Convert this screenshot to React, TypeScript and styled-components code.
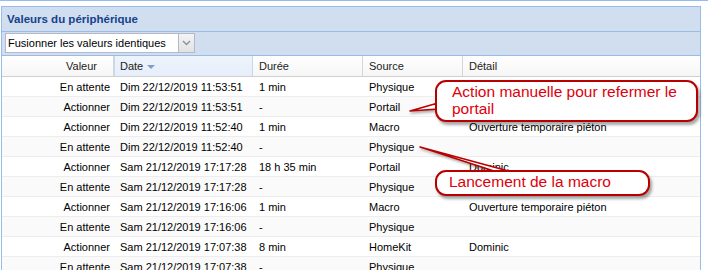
import React from 'react';
import styled, { createGlobalStyle } from 'styled-components';

const GlobalStyle = createGlobalStyle`
  html, body {
    margin: 0;
    padding: 0;
    background: #fff;
  }
  body {
    font-family: "Liberation Sans", Arial, sans-serif;
  }
`;

type RowType = {
  value: string;
  date: string;
  duration: string;
  source: string;
  detail: string;
};

const rows: RowType[] = [
  { value: 'En attente', date: 'Dim 22/12/2019 11:53:51', duration: '1 min', source: 'Physique', detail: '' },
  { value: 'Actionner', date: 'Dim 22/12/2019 11:53:51', duration: '-', source: 'Portail', detail: '' },
  { value: 'Actionner', date: 'Dim 22/12/2019 11:52:40', duration: '1 min', source: 'Macro', detail: 'Ouverture temporaire piéton' },
  { value: 'En attente', date: 'Dim 22/12/2019 11:52:40', duration: '-', source: 'Physique', detail: '' },
  { value: 'Actionner', date: 'Sam 21/12/2019 17:17:28', duration: '18 h 35 min', source: 'Portail', detail: 'Dominic' },
  { value: 'En attente', date: 'Sam 21/12/2019 17:17:28', duration: '-', source: 'Physique', detail: '' },
  { value: 'Actionner', date: 'Sam 21/12/2019 17:16:06', duration: '1 min', source: 'Macro', detail: 'Ouverture temporaire piéton' },
  { value: 'En attente', date: 'Sam 21/12/2019 17:16:06', duration: '-', source: 'Physique', detail: '' },
  { value: 'Actionner', date: 'Sam 21/12/2019 17:07:38', duration: '8 min', source: 'HomeKit', detail: 'Dominic' },
  { value: 'En attente', date: 'Sam 21/12/2019 17:07:38', duration: '-', source: 'Physique', detail: '' },
];

const App = () => {
  return (
    <Page>
      <GlobalStyle />
      <TopRule />
      <Panel>
        <PanelHeader>Valeurs du périphérique</PanelHeader>
        <Toolbar>
          <Combo>
            <ComboText>Fusionner les valeurs identiques</ComboText>
            <ComboTrigger>
              <svg width="9" height="6" viewBox="0 0 9 6">
                <path d="M1 1 L4.5 4.5 L8 1" fill="none" stroke="#8a95a8" strokeWidth="1.5" />
              </svg>
            </ComboTrigger>
          </Combo>
        </Toolbar>
        <HeaderRow>
          <HeadCell $align="right" $padRight={16}>Valeur</HeadCell>
          <HeadCell $sorted>
            Date
            <SortArrow />
          </HeadCell>
          <HeadCell>Durée</HeadCell>
          <HeadCell>Source</HeadCell>
          <HeadCell $last>Détail</HeadCell>
        </HeaderRow>
        {rows.map((r, i) => (
          <Row key={i} $alt={i % 2 === 1}>
            <Cell $align="right">{r.value}</Cell>
            <Cell>{r.date}</Cell>
            <Cell>{r.duration}</Cell>
            <Cell>{r.source}</Cell>
            <Cell>{r.detail}</Cell>
          </Row>
        ))}
      </Panel>

      <Tails width="708" height="270" viewBox="0 0 708 270">
        <polygon points="410,111 438,103 438,109" fill="#fff" stroke="#b80000" strokeWidth="1.5" strokeLinejoin="round" />
        <polygon points="420,147 497,172 512,172" fill="#fff" stroke="#b80000" strokeWidth="1.5" strokeLinejoin="round" />
      </Tails>
      <Callout $left={435} $top={80} $width={263} $height={42} $padLeft={15}>
        Action manuelle pour refermer le
        <br />
        portail
      </Callout>
      <Callout $left={435} $top={170} $width={215} $height={26} $padLeft={12}>
        Lancement de la macro
      </Callout>
    </Page>
  );
};

export default App;

const Page = styled.div`
  position: relative;
  width: 708px;
  height: 270px;
  overflow: hidden;
  background: #fff;
`;

const TopRule = styled.div`
  height: 0;
  border-top: 1px solid #99bbe8;
  margin-bottom: 5px;
`;

const Panel = styled.div`
  margin-left: 1px;
  width: 700px;
  box-sizing: border-box;
  border: 1px solid #99bbe8;
  border-bottom: none;
`;

const PanelHeader = styled.div`
  height: 24px;
  line-height: 24px;
  padding-left: 5px;
  background: #d0def0;
  border-bottom: 1px solid #99bbe8;
  color: #15428b;
  font-size: 11.5px;
  font-weight: bold;
`;

const Toolbar = styled.div`
  height: 24px;
  box-sizing: border-box;
  padding: 1px 0 0 3px;
  background: #d0def0;
  border-bottom: 1px solid #99bbe8;
  display: flex;
  align-items: flex-start;
`;

const Combo = styled.div`
  display: flex;
  width: 190px;
  height: 20px;
`;

const ComboText = styled.div`
  flex: 1;
  box-sizing: border-box;
  height: 20px;
  line-height: 18px;
  padding-left: 2px;
  background: #fff;
  border: 1px solid #b5b8c8;
  border-right: none;
  font-size: 11px;
  color: #000;
  white-space: nowrap;
`;

const ComboTrigger = styled.div`
  width: 17px;
  height: 20px;
  box-sizing: border-box;
  border: 1px solid #b5b8c8;
  background: linear-gradient(#f4f4f4, #e2e2e2);
  display: flex;
  align-items: center;
  justify-content: center;
`;

const columns = '112px 139px 110px 100px 1fr';

const HeaderRow = styled.div`
  display: grid;
  grid-template-columns: ${columns};
  height: 21px;
  box-sizing: border-box;
  border-bottom: 1px solid #d0d0d0;
  background: linear-gradient(#ffffff, #f6f6f6);
`;

const HeadCell = styled.div<{ $align?: 'left' | 'right'; $padRight?: number; $sorted?: boolean; $last?: boolean }>`
  display: flex;
  align-items: center;
  justify-content: ${(p) => (p.$align === 'right' ? 'flex-end' : 'flex-start')};
  padding: 0 ${(p) => p.$padRight ?? 4}px 0 6px;
  font-size: 11px;
  color: #222;
  border-right: ${(p) => (p.$last ? 'none' : '1px solid')};
  border-right-color: ${(p) => (p.$sorted ? '#c5d8ef' : '#d6d6d6')};
  box-shadow: ${(p) => (p.$sorted ? 'inset 1px 0 0 #c5d8ef' : 'none')};
  background: ${(p) => (p.$sorted ? 'linear-gradient(#eef4fc, #e6eefa)' : 'transparent')};
  white-space: nowrap;
`;

const SortArrow = styled.span`
  display: inline-block;
  margin-left: 4px;
  margin-top: 1px;
  width: 0;
  height: 0;
  border-left: 4px solid transparent;
  border-right: 4px solid transparent;
  border-top: 4px solid #7e9fcc;
`;

const Row = styled.div<{ $alt: boolean }>`
  display: grid;
  grid-template-columns: ${columns};
  height: 20px;
  box-sizing: border-box;
  border-bottom: 1px solid #ededed;
  background: ${(p) => (p.$alt ? '#fafafa' : '#fff')};
`;

const Cell = styled.div<{ $align?: 'left' | 'right' }>`
  display: flex;
  align-items: center;
  justify-content: ${(p) => (p.$align === 'right' ? 'flex-end' : 'flex-start')};
  padding: ${(p) => (p.$align === 'right' ? '0 4px 0 0' : '0 0 0 6px')};
  font-size: 11px;
  color: #000;
  white-space: nowrap;
  overflow: hidden;
`;

const Tails = styled.svg`
  position: absolute;
  left: 0;
  top: 0;
  pointer-events: none;
  filter: drop-shadow(1px 2px 1px rgba(0, 0, 0, 0.3));
`;

const Callout = styled.div<{ $left: number; $top: number; $width: number; $height: number; $padLeft: number }>`
  position: absolute;
  left: ${(p) => p.$left}px;
  top: ${(p) => p.$top}px;
  width: ${(p) => p.$width}px;
  height: ${(p) => p.$height}px;
  box-sizing: border-box;
  padding: 1px 0 0 ${(p) => p.$padLeft}px;
  background: #fff;
  border: 2px solid #b80000;
  border-radius: 11px;
  box-shadow: 2px 3px 3px rgba(0, 0, 0, 0.35);
  color: #e0000b;
  font-size: 15.5px;
  line-height: 17px;
  white-space: nowrap;
`;
